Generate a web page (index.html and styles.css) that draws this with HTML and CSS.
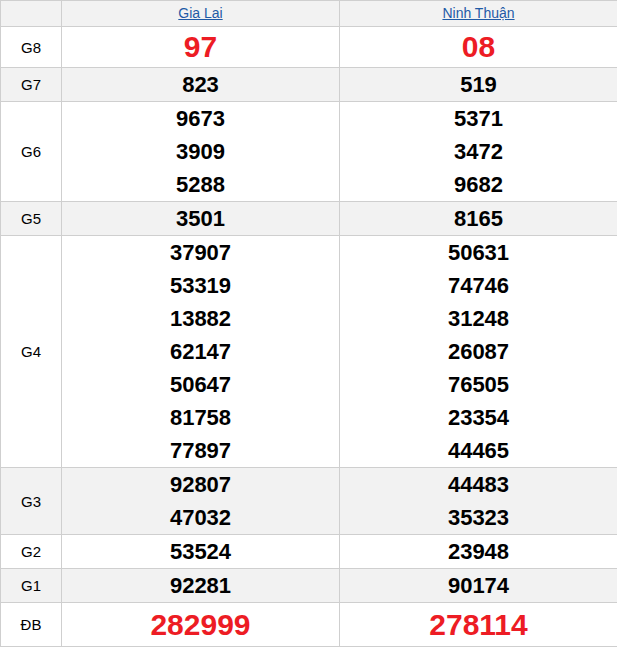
FILE: index.html
```html
<!DOCTYPE html>
<html lang="vi">
<head>
<meta charset="utf-8">
<title>Kết quả xổ số</title>
<link rel="stylesheet" href="styles.css">
</head>
<body>
<table class="kq">
  <colgroup>
    <col class="c-label">
    <col class="c-prov">
    <col class="c-prov">
  </colgroup>
  <thead>
    <tr class="hd">
      <th></th>
      <th><a href="#">Gia Lai</a></th>
      <th><a href="#">Ninh Thuận</a></th>
    </tr>
  </thead>
  <tbody>
    <tr class="g8">
      <td class="lb">G8</td>
      <td class="num red big"><div>97</div></td>
      <td class="num red big"><div>08</div></td>
    </tr>
    <tr class="alt">
      <td class="lb">G7</td>
      <td class="num"><div>823</div></td>
      <td class="num"><div>519</div></td>
    </tr>
    <tr>
      <td class="lb">G6</td>
      <td class="num"><div>9673</div><div>3909</div><div>5288</div></td>
      <td class="num"><div>5371</div><div>3472</div><div>9682</div></td>
    </tr>
    <tr class="alt">
      <td class="lb">G5</td>
      <td class="num"><div>3501</div></td>
      <td class="num"><div>8165</div></td>
    </tr>
    <tr>
      <td class="lb">G4</td>
      <td class="num"><div>37907</div><div>53319</div><div>13882</div><div>62147</div><div>50647</div><div>81758</div><div>77897</div></td>
      <td class="num"><div>50631</div><div>74746</div><div>31248</div><div>26087</div><div>76505</div><div>23354</div><div>44465</div></td>
    </tr>
    <tr class="alt">
      <td class="lb">G3</td>
      <td class="num"><div>92807</div><div>47032</div></td>
      <td class="num"><div>44483</div><div>35323</div></td>
    </tr>
    <tr>
      <td class="lb">G2</td>
      <td class="num"><div>53524</div></td>
      <td class="num"><div>23948</div></td>
    </tr>
    <tr class="alt">
      <td class="lb">G1</td>
      <td class="num"><div>92281</div></td>
      <td class="num"><div>90174</div></td>
    </tr>
    <tr class="db">
      <td class="lb">ĐB</td>
      <td class="num red big"><div>282999</div></td>
      <td class="num red big"><div>278114</div></td>
    </tr>
  </tbody>
</table>
</body>
</html>
```
FILE: styles.css
```css
html, body {
  margin: 0;
  padding: 0;
  background: #fff;
}
body {
  font-family: "Liberation Sans", Arial, sans-serif;
  color: #000;
}
.kq {
  border-collapse: collapse;
  table-layout: fixed;
  width: 618px;
}
.c-label { width: 61px; }
.c-prov { width: 278px; }
.kq th,
.kq td {
  border: 1px solid #cfcfcf;
  padding: 0;
  text-align: center;
  vertical-align: middle;
}
.hd th {
  background: #f2f2f2;
  height: 25px;
  line-height: 25px;
  font-size: 14px;
  font-weight: normal;
}
.hd a {
  color: #1f5aa6;
  text-decoration: underline;
}
.alt td {
  background: #f2f2f2;
}
.lb {
  font-size: 15px;
}
.num {
  font-size: 22px;
  font-weight: bold;
  line-height: 33px;
}
.num.red {
  color: #ed1c24;
}
.num.big {
  font-size: 30px;
}
.g8 .num {
  line-height: 40px;
}
.db .num {
  line-height: 43px;
}
```
